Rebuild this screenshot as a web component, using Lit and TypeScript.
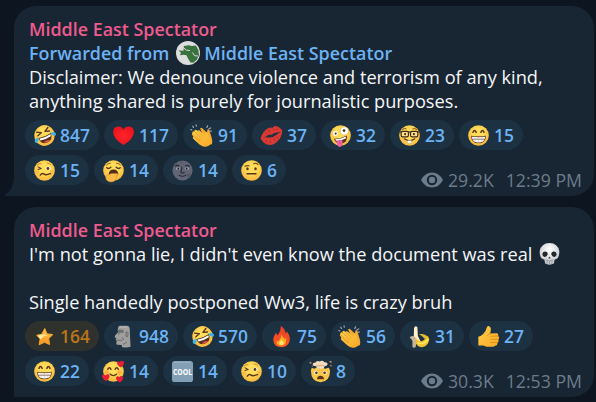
import { LitElement, html, svg, css, nothing } from "lit";
import { customElement, property } from "lit/decorators.js";

const face = svg`<circle cx="12" cy="12" r="10.800" fill="url(#skin)"/>`;

const tears = svg`
  <g transform="rotate(-22 12 12)">
    ${face}
    <path d="M5.600 5.600l4.400 2.500-4.500 1.500M18.400 5.600L14 8.100l4.500 1.500" fill="none" stroke="#59341c" stroke-width="1.400" stroke-linecap="round" stroke-linejoin="round"/>
    <path d="M4.800 12.200q7.200 1.600 14.400 0q-.6 7.800-7.200 7.800t-7.200-7.800z" fill="#55301b"/>
    <path d="M5.700 13q6.300 1.200 12.600 0l-.5 2.200q-5.800 1.300-11.600 0z" fill="#fff"/>
    <path d="M8.400 18.700q3.600-2.600 7.200 0q-3.600 2.200-7.200 0z" fill="#ef5350"/>
    <path d="M5.200 11.300q-5.200.5-5 3.200q.4 2.300 2.600 1.500q1.800-1 2.400-4.700zM18.800 11.300q5.200.5 5 3.200q-.4 2.300-2.600 1.500q-1.800-1-2.400-4.700z" fill="#3fb4e4"/>
  </g>`;

const clap = svg`
  <path d="M2.600 3.700l-.8-1.500M5.400 2.300L5.300.8M.9 6.200L-.3 5.800M16.500 3.600l.9-1.800M18.600 5.200l2-1.200M19.400 7.600l2-.2" stroke="#aeb7bd" stroke-width="1.100" stroke-linecap="round"/>
  <path d="M9.500 4.600q1-1.300 2.300-.2l5 4.600.1-2.600q.8-1.600 2.100-.3l2.500 8q1.500 4.600.3 7l-5 .9z" fill="#f2aa32"/>
  <path d="M1.600 8.200q1.100-1.200 2.300-.1l-.4-1.300q1.100-1.500 2.400-.4l.9.900q.9-1.400 2.200-.4l6.200 5.700-.3-3.300q.8-1.600 2.100-.2l2.400 5.300q2 4.500.2 7.600-2.300 2-5.400 1.700-3-.1-5.300-2.300L2.300 15.500q-1.200-1.400.2-2.200l-.7-1.300q-1.500-1.100-.6-2.200z" fill="url(#hand)"/>
  <path d="M3.900 8.100l7.200 7M2.500 13.300l.3-.1 6.400 5M1.900 10.300l7.900 6.800M6.800 7.300l5.900 5.700" fill="none" stroke="#dd8f22" stroke-width=".7" stroke-linecap="round"/>`;

const grin = svg`
  ${face}
  <path d="M6.300 8.600q1.600-3.600 3.200 0M14.500 8.600q1.600-3.600 3.200 0" fill="none" stroke="#59341c" stroke-width="1.700" stroke-linecap="round"/>
  <path d="M4.300 12.200q7.700 1.200 15.400 0q.2 8-7.700 8t-7.700-8z" fill="#694128"/>
  <path d="M5.300 13.200q6.700 1 13.400 0v2.200H5.300zM5.700 16.200h12.600q-1.200 3-6.300 3t-6.300-3z" fill="#fff"/>
  <path d="M8.500 13.500v5M12 13.600v5.500M15.500 13.500v5" stroke="#b9b2ae" stroke-width=".5"/>`;

const woozy = svg`
  ${face}
  <path d="M4.400 6.300q1.600-2 4-1.300M14.800 4.300q2.200-.5 3.700 1.400" fill="none" stroke="#c78a2c" stroke-width="1" stroke-linecap="round"/>
  <path d="M5.300 8.200l3.200 1.700-3.300 1" fill="none" stroke="#59341c" stroke-width="1.100" stroke-linecap="round" stroke-linejoin="round"/>
  <ellipse cx="15.800" cy="9.700" rx="2.500" ry="1.900" fill="#fff"/><circle cx="15.600" cy="9.900" r="1.500" fill="#59341c"/>
  <path d="M7.600 16.800q1.600-2.600 3.600-1.200t4.200.5 2.900-.8" fill="none" stroke="#59341c" stroke-width="1.500" stroke-linecap="round"/>
  <circle cx="4.800" cy="13.600" r="1.700" fill="#f79732" opacity=".4"/><circle cx="19.400" cy="13" r="1.700" fill="#f79732" opacity=".4"/>`;

const glyphs: Record<string, unknown> = {
  tears, clap, grin, woozy,
  heart: svg`<path d="M12 22Q1.200 15.300 1.200 8.600Q1.300 3 6.500 2.700Q10.300 2.700 12 6q1.700-3.300 5.500-3.300q5.200.3 5.300 5.900Q22.800 15.300 12 22z" fill="url(#red)"/>`,
  kiss: svg`
    <path d="M.6 15.200Q2.700 7.300 8.800 4.200q2.400-1.200 4 .1 1.400-2.500 4-2.300 3.600.7 6.500 4.500-.7 8.200-5 11.600-3.200 3.800-8.100 3.900-6.300-.3-9.600-6.800z" fill="#d93a33"/>
    <path d="M2.400 14.800q4-1.300 6.400-3.600l3.600.1 2.400-1.900q3.600 0 7-1.500-3.100 2.600-5.500 3.900-3 2.500-6.500 2.300-3.600-1-7.400.7z" fill="#203040"/>
    <path d="M5.500 8.800l1.600 1.700M8.900 5.800l1 2.800M14.600 4.500l-.5 2.500M18.500 4.700l-1.800 2M7 17l-.9 1.900M10.800 17l.3 2.700M14.400 15.500l1.300 2.300M17 13.500l1.900 1.500" stroke="#97272b" stroke-width=".7"/>`,
  zany: svg`
    ${face}
    <circle cx="6.700" cy="9.800" r="2.600" fill="#fff"/><circle cx="7" cy="10" r="1.100" fill="#49301f"/>
    <circle cx="16" cy="7.200" r="4.200" fill="#fff" stroke="#e0a336" stroke-width=".5"/><circle cx="15.700" cy="6.900" r="1.400" fill="#49301f"/>
    <path d="M5.100 15.300q7.300.3 13.500-3.300q1.200 6.600-5 8.400-6.200.9-8.500-5.100z" fill="#5b321e"/>
    <path d="M6.500 15.900q6-.2 11.300-2.800l-.3 1.900q-4.800 2.500-10.200 2.400z" fill="#fff"/>
    <path d="M7.900 17.700q3-1.700 5.900-.8l.4 4.300q-.6 2.800-2.900 2.800t-2.800-2.600z" fill="#f164a8"/>
    <path d="M11 18l.4 3" stroke="#c93c81" stroke-width=".7"/>`,
  nerd: svg`
    ${face}
    <path d="M4.300 5.800q2.500-2 4.600-.6M15.100 5.200q2.300-1.300 4.600.6" fill="none" stroke="#76451e" stroke-width="1"/>
    <rect x="3.300" y="7.700" width="7.600" height="5.700" rx="1.700" fill="#fee08a" stroke="#3c2a20" stroke-width="1.200"/>
    <rect x="13.100" y="7.700" width="7.600" height="5.700" rx="1.700" fill="#fee08a" stroke="#3c2a20" stroke-width="1.200"/>
    <path d="M1.500 8.200h2M20.500 8.200h2M10.600 8.600q1.400-.8 2.800 0" fill="none" stroke="#3c2a20" stroke-width="1.300"/>
    <circle cx="7.400" cy="10.500" r="1.200" fill="#4b2e1c"/><circle cx="16.600" cy="10.500" r="1.200" fill="#4b2e1c"/>
    <path d="M6.500 15.500q5.500 4 11 0" fill="none" stroke="#59341c" stroke-width="1.300" stroke-linecap="round"/>
    <path d="M10 17.300h4v2.700h-4z" fill="#fff" stroke="#b9aca0" stroke-width=".4"/>`,
  yawn: svg`
    ${face}
    <path d="M4.700 6.200q1.500-1.800 4-1.800M15.300 4.400q2.500 0 4 1.800" fill="none" stroke="#8b571e" stroke-width="1" stroke-linecap="round"/>
    <path d="M5 9.100q2 1.600 4.200-.5M14.800 8.600q2.200 2.100 4.200.5" fill="none" stroke="#59341c" stroke-width="1.500" stroke-linecap="round"/>
    <path d="M6.900 16.500q.3-5.500 5.100-5.500t5.100 5.500z" fill="#532d1b"/>
    <path d="M4 18.500q.8-2.600 3.600-2.300 2.400-1.600 5.200-.9 3.800-.3 4.500 1-.3 1.300-2.800 1.500 1.900.6.900 2.200l-2.700 3.100q-3.100 1.500-6.100.2-3.100-1.500-2.600-4.800z" fill="#f8bc45" stroke="#d48f2a" stroke-width=".6"/>`,
  moon: svg`
    <circle cx="12" cy="12" r="10.500" fill="#626574"/>
    <g fill="#545766"><circle cx="5" cy="6" r="1.800"/><circle cx="18.500" cy="17" r="2"/><circle cx="11" cy="3.700" r="1.200"/></g>
    <path d="M4.500 7.800q2-2 4.600-.5M14.800 7.300q2.500-1.500 4.600.5" fill="none" stroke="#292b36" stroke-width="1.200"/>
    <ellipse cx="7.400" cy="10" rx="2.200" ry="1.300" fill="#b4b9c4"/><ellipse cx="16.500" cy="10" rx="2.200" ry="1.300" fill="#b4b9c4"/>
    <circle cx="7.600" cy="10" r="1.100" fill="#1e2028"/><circle cx="16.300" cy="10" r="1.100" fill="#1e2028"/>
    <path d="M11.300 8.500l-.9 5.500q1.600 1.200 3.200 0M8.500 17q3.500 2 7 0" fill="none" stroke="#2b2d38" stroke-width="1.200" stroke-linecap="round"/>`,
  brow: svg`
    ${face}
    <path d="M5.200 7.600q2-1.200 4.300-.5M14.200 4.900q2.400-1.300 4.400.8" fill="none" stroke="#76451e" stroke-width="1.200" stroke-linecap="round"/>
    <ellipse cx="7.800" cy="10.200" rx="1.300" ry="1.600" fill="#59341c"/><ellipse cx="16.200" cy="10.200" rx="1.300" ry="1.600" fill="#59341c"/>
    <path d="M7.300 15.400h9.400" stroke="#59341c" stroke-width="1.500" stroke-linecap="round"/>`,
  star: svg`
    <path d="M12.300 3.700l2.300 5.500 6.100.8-4.300 4.200.9 6.200-5.400-2.400-5.500 2.600 1.100-6.200-3.600-3.700 5.200-1z" fill="url(#gold)" stroke="#f8a82c" stroke-width="1" stroke-linejoin="round"/>
    <path d="M4.800 11.200q6.500-2.200 10.200-.4-4.400.7-7.200 4.200z" fill="#ffe795"/>`,
  moai: svg`
    <path d="M6.500 2.100q.7-1.300 2.300-1.300h6.800q2.500 0 2.900 2.400l.4 10.300.5 9.300q-4.300 1.500-9 .2l-.2-2.200-4.900-.2q-1.300-.7-.7-2.400l.3-1.900-1.200-.8.900-2-1.700-.5Q2.300 11.500 4.600 9.500l1.800-2.300-.5-1.700z" fill="#a09f9c"/>
    <path d="M6.100 5.300q3.400-1.300 6.400.6l-.8 2.400-3.500-.3-1.400 3.300z" fill="#6d7071"/>
    <path d="M5.200 15.700l5.300.4M10.200 12.800q2 .5 1.600 3M14.700 7.200l2 .6-.3 4.500-1.900-.7zM11.400 20.300l4.200-2.300" fill="none" stroke="#696c6d" stroke-width="1"/>
    <path d="M8 2.200h8" stroke="#bfc0bc" stroke-width="1"/>`,
  fire: svg`
    <path d="M11.200.8q4.900 3.200 5 8l1.500-2q3.600 4.800 2.900 9.200-1.200 7.200-8.600 7.200T3.500 16.400q-.5-3.900 3-8.200l1.200 2.700Q11.500 6.500 11.200.8z" fill="url(#flame)"/>
    <path d="M12.200 9.600q.4 3 3.300 5l1.300-1q.8 7.800-4.800 7.800t-5-5l1.600 1q3-3 3.600-7.800z" fill="#ffb224"/>
    <path d="M12 15.500q2.600 2.500 2 4.500-2 2-4 0-.6-2.200 2-4.500z" fill="#ffe678"/>`,
  banana: svg`
    <path d="M6 12.500L6.300 3q1.400-3.200 3.500-.6l.5 9 3.200 6.400-3 2.800-4-3.500z" fill="#fff1cb"/>
    <path d="M7.600 12.500q-4.200-2.600-5.900.8 2 .6 3 3.600l-.1 5.700q.7 2 3.300.7l1.300-6.800z" fill="#c9b698"/>
    <path d="M8.200 13q2.300 4.200 6.200 3.900 4.200-1.600 4.700-5.900 2.600.8 3.100 4-1.200 7-8 8.300-4.500-.3-6.100-4.700z" fill="#f7c52f"/>
    <path d="M11.300 9.600q6.700-1.300 8.600 2.900l-2.600 1.900q-2.400-3.300-6-4.800z" fill="#e5bd2d"/>
    <path d="M10 18.700q7 2.400 11-4" fill="none" stroke="#ffeb68" stroke-width="1.400"/>`,
  thumb: svg`
    <path d="M1.400 12.200q2.900-.2 5.100-2.700 2.900-2.900 3.500-6.400.7-2.700 2.700-1.900 2.500 1.100 1.500 5.400l-.5 2.200 6.800-.1q2.400.5 1.500 2.900 2.100 1.300.3 3.600 1.100 2-.8 3.300.2 2.700-2.400 3.200l-2.100 1.100-7.200-.2-3.200-1.300-5.200.2z" fill="url(#hand)"/>
    <path d="M14 11.700l7.400-.1M14.300 15l7.500-.1M14.300 18.300l6.400-.2M13.500 8.800q-2 .4-2.600 2.500" fill="none" stroke="#db8c1b" stroke-width=".9" stroke-linecap="round"/>`,
  hearts: svg`
    ${face}
    <path d="M6 9.700q1.700-3.100 3.400 0M13.700 9.700q1.700-3.100 3.400 0" fill="none" stroke="#59341c" stroke-width="1.500" stroke-linecap="round"/>
    <path d="M8.300 14.700q3.500 3.300 7 0" fill="none" stroke="#59341c" stroke-width="1.400" stroke-linecap="round"/>
    <circle cx="5.300" cy="12.800" r="2.200" fill="#f58b37" opacity=".5"/><circle cx="18" cy="12.800" r="2.200" fill="#f58b37" opacity=".5"/>
    <g fill="#e91d37">
      <path d="M19.800 7.800q-4.700-2.300-4-5.100 1-2.200 3-.5 1.400-2.500 3.600-.8 2 2.600-2.600 6.400z"/>
      <path d="M4.500 22.200Q-1.100 18.700.2 15.900q1.700-1.900 3.600.4 2-2.400 3.900-.4.900 2.700-3.200 6.300z"/>
      <path d="M18.700 23.500q-4.800-2.600-3.900-5.600 1.300-2 3.300.1 1.800-2.400 3.700-.5 1.200 2.700-3.100 6z"/>
    </g>`,
  cool: svg`
    <rect x="1" y="1" width="22" height="22" rx="3" fill="#829fb6"/>
    <path d="M3 2.400h18" stroke="#a7b8c4" stroke-width=".8"/>
    <text x="12" y="15.200" text-anchor="middle" textLength="20" lengthAdjust="spacingAndGlyphs" font-size="8.500" font-weight="700" fill="#fff">COOL</text>`,
  mind: svg`
    <path d="M2 11.500Q2 9.500 3 8l2.500 1.200L8 7.800l3 1.200 3-1.300 2.700 1.400L20.600 8q1.400 1.700 1.400 4-.6 10.900-10 11.200Q2.200 22.700 2 11.500z" fill="#fbc546"/>
    <path d="M8.500 8.800l-1-2.300q-3.600 0-3.700-2 .4-2 3-1.800 1.800-2.300 4.300-1.200 3.200-1.500 4.900.8 3.400-.3 3.500 2-.4 2.200-3.300 2.100l-.8 2.300-3.500.8z" fill="#f4dcbe"/>
    <path d="M7.500 5.800q2 1 4 0t4.500.3" stroke="#c99d72" stroke-width=".9" fill="none"/>
    <path d="M-.2 3l2.300-1.500.7 2.400zM20.600 1.700l2.700-.9.2 2.200zM21.500 5.800l2-.8v2zM2.500 6.200l1.500-.4.200 1.300z" fill="#e0915a"/>
    <circle cx="7.500" cy="13.300" r="2.100" fill="#fff"/><circle cx="16.500" cy="13.300" r="2.100" fill="#fff"/><circle cx="7.700" cy="13.400" r="1.400" fill="#59341c"/><circle cx="16.300" cy="13.400" r="1.400" fill="#59341c"/>
    <path d="M8.300 20.200q.2-3.800 3.700-3.800t3.700 3.800z" fill="#59341c"/>`,
  skull: svg`
    <path d="M6.700 18.500L3.500 16.900q-2-2.600-1.700-7.500Q3.300 1.400 12 1.100q8.700.3 10.200 8.300.3 4.900-1.700 7.500l-3.200 1.600-.7 4q-2.300 1.300-4.600 1.200-2.600.1-4.600-1.200z" fill="url(#bone)"/>
    <path d="M4.600 12.400q.3-2.600 3.200-2.500 2.900.5 2.200 3.200-.7 2.600-3.100 2.500-2.500-.4-2.300-3.200zM19.400 12.400q-.3-2.600-3.200-2.500-2.900.5-2.200 3.200.7 2.600 3.100 2.500 2.500-.4 2.300-3.200z" fill="#252629"/>
    <path d="M12 15l-1.300 2.200h2.600z" fill="#36373a"/>
    <path d="M7.600 18.600q4.400 2 8.800 0M9.500 19.300v3.200M12 19.600v3.500M14.500 19.300v3.200" fill="none" stroke="#8c8f93" stroke-width=".8"/>`,
};

const defs = svg`<defs>
  <radialGradient id="skin" cx=".5" cy=".4" r=".6"><stop offset=".4" stop-color="#ffdc59"/><stop offset="1" stop-color="#f7b73c"/></radialGradient>
  <linearGradient id="hand" x2="1" y2="1"><stop stop-color="#ffd14b"/><stop offset="1" stop-color="#f9a825"/></linearGradient>
  <radialGradient id="red"><stop stop-color="#ff2527"/><stop offset="1" stop-color="#ee1420"/></radialGradient>
  <linearGradient id="gold" x2="0" y2="1"><stop stop-color="#ffcf51"/><stop offset="1" stop-color="#f99020"/></linearGradient>
  <linearGradient id="flame" x2="0" y2="1"><stop stop-color="#e83d28"/><stop offset="1" stop-color="#ff5a20"/></linearGradient>
  <radialGradient id="bone" cx=".5" cy=".3" r=".7"><stop stop-color="#fff"/><stop offset="1" stop-color="#bfc2c7"/></radialGradient>
</defs>`;

@customElement("emoji-glyph")
class EmojiGlyph extends LitElement {
  @property() name = "";
  static styles = css`
    :host { display: block; flex: none; width: 23px; height: 23px; }
    svg { display: block; width: 100%; height: 100%; overflow: visible; }
  `;
  render() {
    return html`<svg viewBox="0 0 24 24">${defs}${glyphs[this.name]}</svg>`;
  }
}

type Reaction = [string, number];

@customElement("reaction-list")
class ReactionList extends LitElement {
  @property({ attribute: false }) rows: Reaction[][] = [];
  static styles = css`
    :host { display: flex; flex-direction: column; gap: 5px; }
    .row { display: flex; gap: 5px; }
    .chip { box-sizing: border-box; display: flex; align-items: center; gap: 4px; height: 30px; padding-left: 8px; border-radius: 15px; background: #1c3142; color: #6cb3f5; font-size: 17.4px; font-weight: 600; line-height: 30px; }
    .d1 { width: 54px; }
    .d2 { width: 64px; }
    .d3 { width: 74px; }
    .paid { background: #2f322c; color: #b9751b; }
  `;
  render() {
    return this.rows.map(row => html`<div class="row">${row.map(([name, count]) => html`
      <div class="chip d${String(count).length} ${name === "star" ? "paid" : ""}"><emoji-glyph name=${name}></emoji-glyph><span>${count}</span></div>`)}</div>`);
  }
}

@customElement("message-card")
class MessageCard extends LitElement {
  @property({ attribute: false }) rows: Reaction[][] = [];
  @property() views = "";
  @property() time = "";
  @property({ type: Boolean }) tail = false;
  static styles = css`
    :host { position: relative; display: block; box-sizing: border-box; height: 190px; padding: 11px 12px 0 15px; border-radius: 22px 22px 22px 0; background: #182532; color: #f4f6f8; }
    .tail { position: absolute; left: -9px; bottom: 0; width: 9px; height: 18px; fill: #182532; }
    .name { color: #ed5b8f; font-weight: 600; font-size: 17.9px; }
    .line { height: 24px; white-space: pre; }
    reaction-list { margin: 7px 0 0 -4px; }
    .meta { position: absolute; right: 12px; bottom: 4px; display: flex; align-items: center; height: 24px; color: #6c7c8b; font-size: 17.7px; white-space: pre; }
    .eye { width: 22px; height: 16px; margin: -1px 5px 0 0; }
    .time { margin-left: 12px; }
  `;
  render() {
    return html`
      ${this.tail ? html`<svg class="tail" viewBox="0 0 9 18"><path d="M9 0v18H0v-1Q8 12 9 0z"/></svg>` : nothing}
      <div class="line name">Middle East Spectator</div>
      <slot></slot>
      <reaction-list .rows=${this.rows}></reaction-list>
      <div class="meta">
        <svg class="eye" viewBox="0 0 22 16"><path fill="#6c7c8b" fill-rule="evenodd" d="M11 .5Q18 .5 22 8q-4 7.500-11 7.500T0 8Q4 .5 11 .5zM11 2.800a5.200 5.200 0 1 0 0 10.400a5.200 5.200 0 1 0 0-10.400z"/><circle cx="11" cy="8" r="3.200" fill="#6c7c8b"/></svg>
        <span>${this.views}</span><span class="time">${this.time}</span>
      </div>`;
  }
}

@customElement("app-root")
class AppRoot extends LitElement {
  static styles = css`
    :host { display: flex; flex-direction: column; gap: 11px; box-sizing: border-box; width: 596px; height: 402px; padding: 6px 2px 0 14px; overflow: hidden; background: #0d1520; font: 18.2px/24px "Open Sans", "Noto Sans", sans-serif; }
    .line { display: flex; height: 24px; align-items: center; white-space: pre; }
    .forward { color: #6cb3f5; font-weight: 600; font-size: 17.9px; }
    .avatar { width: 24px; height: 24px; margin: 0 4px 0 7px; }
    .skull { margin: -2px 0 0 6px; }
  `;
  render() {
    return html`
      <message-card tail views="29.2K" time="12:39 PM" .rows=${[
        [["tears", 847], ["heart", 117], ["clap", 91], ["kiss", 37], ["zany", 32], ["nerd", 23], ["grin", 15]],
        [["woozy", 15], ["yawn", 14], ["moon", 14], ["brow", 6]],
      ]}>
        <div class="line forward"><span>Forwarded from</span><svg class="avatar" viewBox="0 0 24 24"><circle cx="12" cy="12" r="12" fill="#dcdddd"/><path d="M2.500 9.500l5 .2L7.800 5l5-.8 3 .8 4-.5 2.600 4.500.6 5-2 4.500-3.600 3.300-2.900-.3-2.500-4-1.500-3.300-2.500-.5L4 14.200l1-2.500z" fill="#39723d"/><path d="M6.200 5.800l4.300 3.400 3.500.3M16.500 11.500l2 3.200 3.500.3" fill="none" stroke="#dcdddd" stroke-width="1"/></svg><span>Middle East Spectator</span></div>
        <div class="line">Disclaimer: We denounce violence and terrorism of any kind,</div>
        <div class="line">anything shared is purely for journalistic purposes.</div>
      </message-card>
      <message-card views="30.3K" time="12:53 PM" .rows=${[
        [["star", 164], ["moai", 948], ["tears", 570], ["fire", 75], ["clap", 56], ["banana", 31], ["thumb", 27]],
        [["grin", 22], ["hearts", 14], ["cool", 14], ["woozy", 10], ["mind", 8]],
      ]}>
        <div class="line"><span>I'm not gonna lie, I didn't even know the document was real</span><emoji-glyph class="skull" name="skull"></emoji-glyph></div>
        <div class="line"></div>
        <div class="line">Single handedly postponed Ww3, life is crazy bruh</div>
      </message-card>`;
  }
}
